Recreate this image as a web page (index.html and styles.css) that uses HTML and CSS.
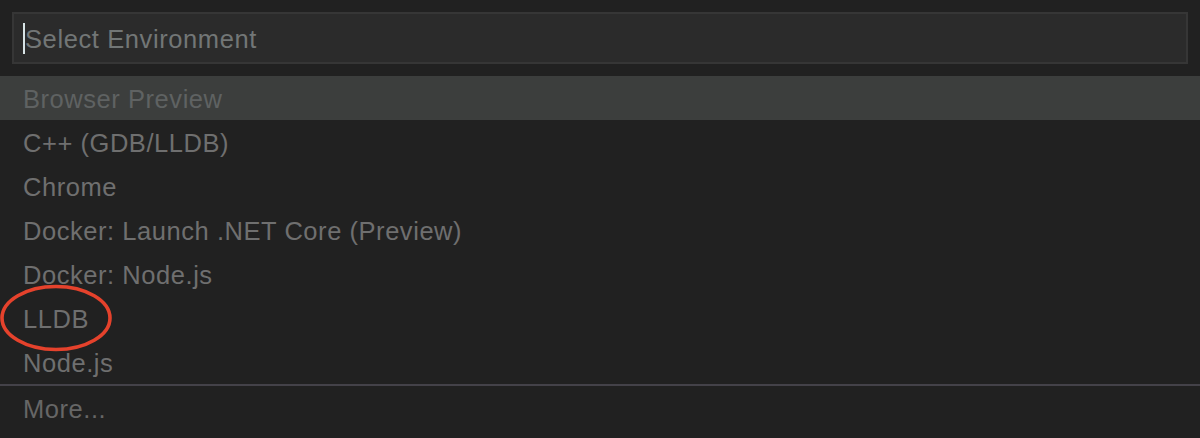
FILE: index.html
```html
<!DOCTYPE html>
<html>
<head>
<meta charset="utf-8">
<link rel="stylesheet" href="styles.css">
</head>
<body>
<div class="picker">
  <div class="input-wrap">
    <div class="input">
      <span class="caret"></span>
      <span class="placeholder">Select Environment</span>
    </div>
  </div>
  <ul class="list">
    <li class="item selected">Browser Preview</li>
    <li class="item">C++ (GDB/LLDB)</li>
    <li class="item">Chrome</li>
    <li class="item">Docker: Launch .NET Core (Preview)</li>
    <li class="item">Docker: Node.js</li>
    <li class="item marked">LLDB
      <svg class="circle" width="116" height="70" viewBox="0 0 116 70"><ellipse cx="57" cy="35" rx="54" ry="31.5" fill="none" stroke="#e5422c" stroke-width="3.6"/></svg>
    </li>
    <li class="item">Node.js</li>
  </ul>
  <div class="more">More...</div>
</div>
</body>
</html>
```

FILE: styles.css
```css
html, body {
  margin: 0;
  padding: 0;
  background: #212121;
  height: 100%;
  overflow: hidden;
}
.picker {
  font-family: "Liberation Sans", Arial, sans-serif;
  font-size: 25.5px;
  color: #6f6f6f;
}
.input-wrap {
  padding: 12px;
}
.input {
  height: 48px;
  background: #2b2b2b;
  border: 2px solid #363636;
  display: flex;
  align-items: center;
  padding-left: 9px;
}
.caret {
  width: 2px;
  height: 31px;
  background: #d8e4e6;
}
.placeholder {
  color: #727676;
  letter-spacing: 0.6px;
  padding-top: 2px;
}
.list {
  list-style: none;
  margin: 0;
  padding: 0;
}
.item {
  box-sizing: border-box;
  height: 44px;
  display: flex;
  align-items: center;
  padding-left: 23px;
  padding-top: 2px;
  letter-spacing: 0.55px;
}
.item.selected {
  background: #3c3e3d;
  color: #5f6262;
}
.marked {
  position: relative;
}
.circle {
  position: absolute;
  left: -1px;
  top: -13px;
}
.more {
  box-sizing: border-box;
  border-top: 2px solid #444249;
  height: 46px;
  display: flex;
  align-items: center;
  padding-left: 23px;
  padding-top: 2px;
  color: #666666;
  letter-spacing: 0.55px;
}
```
